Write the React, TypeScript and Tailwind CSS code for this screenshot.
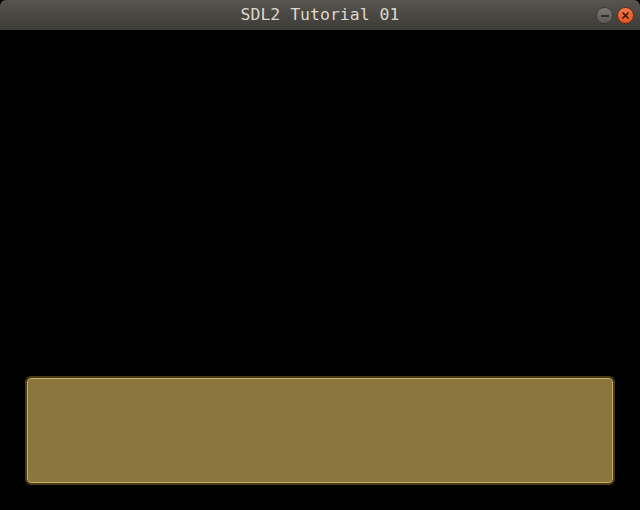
import React from 'react';

export default function App() {
  return (
    <div className="flex h-[510px] w-[640px] flex-col bg-black">
      <div className="relative flex h-[30px] items-center justify-center rounded-t-[6px] bg-gradient-to-b from-[#57544e] to-[#3e3c38]">
        <span className="pt-[1px] text-[16.5px] text-[#dcd8cf] [font-family:'DejaVu_Sans_Mono',monospace]">
          SDL2 Tutorial 01
        </span>
        <div className="absolute right-[6px] top-[7px] flex gap-[4px]">
          <div className="flex h-[17px] w-[17px] items-center justify-center rounded-full border border-[#3a3935] bg-gradient-to-b from-[#7a7873] to-[#5c5a56]">
            <div className="h-[2px] w-[8px] bg-[#2f2e2b]" />
          </div>
          <div className="flex h-[17px] w-[17px] items-center justify-center rounded-full border border-[#6b2a10] bg-gradient-to-b from-[#f57a4a] to-[#e0521f]">
            <svg width="9" height="9" viewBox="0 0 9 9">
              <path d="M1.5 1.5 L7.5 7.5 M7.5 1.5 L1.5 7.5" stroke="#3a1608" strokeWidth="1.6" />
            </svg>
          </div>
        </div>
      </div>
      <div className="flex flex-1 flex-col justify-end px-[25px] pb-[25px]">
        <div className="h-[109px] w-[590px] rounded-[6px] border-2 border-[#4a3b14]">
          <div className="h-full w-full rounded-[4px] border border-[#c2ab6c] bg-[#8b763c]" />
        </div>
      </div>
    </div>
  );
}
